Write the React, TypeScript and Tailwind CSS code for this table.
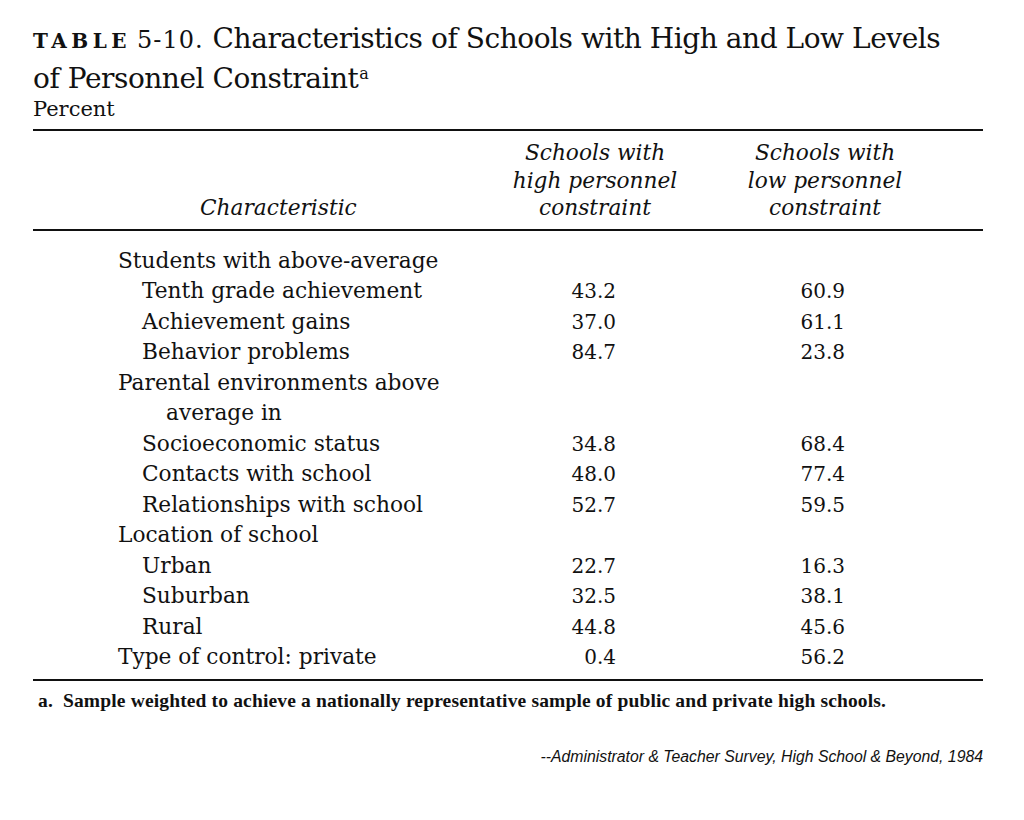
const serif = { fontFamily: '"DejaVu Serif", "Liberation Serif", serif' }

type Row = { label: string; level: 0 | 1 | 2; high?: string; low?: string }

const rows: Row[] = [
  { label: 'Students with above-average', level: 0 },
  { label: 'Tenth grade achievement', level: 1, high: '43.2', low: '60.9' },
  { label: 'Achievement gains', level: 1, high: '37.0', low: '61.1' },
  { label: 'Behavior problems', level: 1, high: '84.7', low: '23.8' },
  { label: 'Parental environments above', level: 0 },
  { label: 'average in', level: 2 },
  { label: 'Socioeconomic status', level: 1, high: '34.8', low: '68.4' },
  { label: 'Contacts with school', level: 1, high: '48.0', low: '77.4' },
  { label: 'Relationships with school', level: 1, high: '52.7', low: '59.5' },
  { label: 'Location of school', level: 0 },
  { label: 'Urban', level: 1, high: '22.7', low: '16.3' },
  { label: 'Suburban', level: 1, high: '32.5', low: '38.1' },
  { label: 'Rural', level: 1, high: '44.8', low: '45.6' },
  { label: 'Type of control: private', level: 0, high: '0.4', low: '56.2' },
]

const indent = ['pl-[85px]', 'pl-[109px]', 'pl-[133px]']

export default function App() {
  return (
    <div className="min-h-[820px] w-[1024px] bg-white text-[#111]">
      <div className="w-[950px] ml-[33px] pt-[20px]" style={serif}>
        <h1 className="text-[28px] leading-[38px] tracking-[-0.45px]">
          <span className="text-[20px] font-bold tracking-[4.5px] mr-[6px]">TABLE</span>
          <span className="text-[24px] tracking-[1px] mr-[9px]">5-10.</span>
          Characteristics of Schools with High and Low Levels
          <br />
          of Personnel Constraint
          <sup className="text-[16px] ml-[1px] top-[-9px]">a</sup>
        </h1>
        <div className="text-[21px] leading-[24px] -mt-[1px]">Percent</div>

        <div className="mt-[8px] border-t-2 border-[#111]">
          <div className="grid grid-cols-[447px_230px_230px] pt-[8px] pb-[7px] italic text-[21.7px] leading-[27.5px] border-b-2 border-[#111]">
            <div className="flex items-end pl-[167px]">Characteristic</div>
            <div className="text-center">
              Schools with
              <br />
              high personnel
              <br />
              constraint
            </div>
            <div className="text-center">
              Schools with
              <br />
              low personnel
              <br />
              constraint
            </div>
          </div>

          <div className="pt-[15px] pb-[6px] border-b-2 border-[#111] leading-[30.5px]">
            {rows.map((r) => (
              <div key={r.label} className="grid grid-cols-[447px_230px_230px]">
                <div className={`${indent[r.level]} text-[21.7px]`}>{r.label}</div>
                <div className="text-right pr-[94px] text-[20px]">{r.high}</div>
                <div className="text-right pr-[95px] text-[20px]">{r.low}</div>
              </div>
            ))}
          </div>
        </div>

        <p
          className="mt-[10px] pl-[5px] text-[19.5px] leading-[20px] font-bold tracking-[0.15px]"
          style={{ fontFamily: '"Liberation Serif", serif' }}
        >
          a.&nbsp; Sample weighted to achieve a nationally representative sample of public and private high schools.
        </p>

        <p
          className="mt-[36px] text-right text-[15.8px] leading-[20px] italic"
          style={{ fontFamily: '"Liberation Sans", sans-serif' }}
        >
          --Administrator &amp; Teacher Survey, High School &amp; Beyond, 1984
        </p>
      </div>
    </div>
  )
}
